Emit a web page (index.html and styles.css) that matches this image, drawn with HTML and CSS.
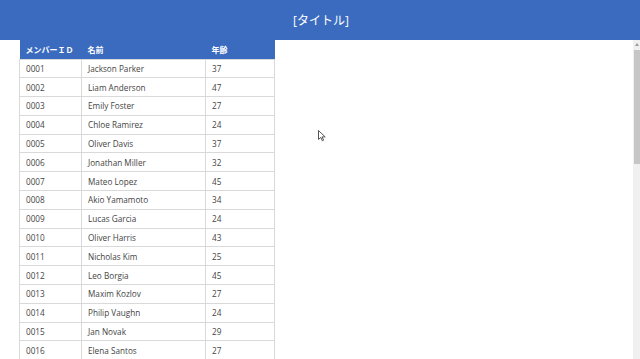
FILE: index.html
```html
<!DOCTYPE html>
<html lang="ja">
<head>
    <meta charset="UTF-8">
    <meta name="viewport" content="width=device-width, initial-scale=1.0">
    <title>メンバー一覧</title>
    <link rel="stylesheet" href="styles.css">
</head>
<body>
    <header class="title-bar">
        <h1>[タイトル]</h1>
    </header>

    <div class="screen">
        <div class="content">
            <table class="members">
                <thead>
                    <tr>
                        <th class="col-id">メンバーＩＤ</th>
                        <th class="col-name">名前</th>
                        <th class="col-age">年齢</th>
                    </tr>
                </thead>
                <tbody>
                    <tr><td>0001</td><td>Jackson Parker</td><td>37</td></tr>
                    <tr><td>0002</td><td>Liam Anderson</td><td>47</td></tr>
                    <tr><td>0003</td><td>Emily Foster</td><td>27</td></tr>
                    <tr><td>0004</td><td>Chloe Ramirez</td><td>24</td></tr>
                    <tr><td>0005</td><td>Oliver Davis</td><td>37</td></tr>
                    <tr><td>0006</td><td>Jonathan Miller</td><td>32</td></tr>
                    <tr><td>0007</td><td>Mateo Lopez</td><td>45</td></tr>
                    <tr><td>0008</td><td>Akio Yamamoto</td><td>34</td></tr>
                    <tr><td>0009</td><td>Lucas Garcia</td><td>24</td></tr>
                    <tr><td>0010</td><td>Oliver Harris</td><td>43</td></tr>
                    <tr><td>0011</td><td>Nicholas Kim</td><td>25</td></tr>
                    <tr><td>0012</td><td>Leo Borgia</td><td>45</td></tr>
                    <tr><td>0013</td><td>Maxim Kozlov</td><td>27</td></tr>
                    <tr><td>0014</td><td>Philip Vaughn</td><td>24</td></tr>
                    <tr><td>0015</td><td>Jan Novak</td><td>29</td></tr>
                    <tr><td>0016</td><td>Elena Santos</td><td>27</td></tr>
                </tbody>
            </table>

            <!-- mouse pointer captured in the screenshot -->
            <svg class="pointer" width="8" height="12" viewBox="0 0 8 12">
                <path d="M0.5 0.5 L0.5 9.5 L2.8 7.4 L4.3 10.8 L5.6 10.2 L4.1 6.9 L7.2 6.9 Z" fill="#fff" stroke="#555" stroke-width="1"/>
            </svg>
        </div>

        <div class="scrollbar">
            <div class="scroll-arrow"></div>
            <div class="scroll-thumb"></div>
        </div>
    </div>
</body>
</html>
```

FILE: styles.css
```css
* {
    margin: 0;
    padding: 0;
    box-sizing: border-box;
}

body {
    font-family: "Open Sans", "Noto Sans CJK JP", sans-serif;
    background-color: #fff;
    width: 640px;
    height: 359px;
    overflow: hidden;
}

.title-bar {
    height: 40px;
    background-color: #3b6bbf;
    display: flex;
    align-items: center;
    justify-content: center;
}

.title-bar h1 {
    font-size: 12px;
    font-weight: normal;
    color: #fff;
    padding-left: 2px;
    padding-bottom: 1px;
}

.screen {
    display: flex;
    height: 319px;
}

.content {
    flex: 1;
    position: relative;
    padding-left: 19px;
}

.members {
    border-collapse: collapse;
    font-size: 8.2px;
    color: #444;
    table-layout: fixed;
    width: 255px;
}

.members th {
    background-color: #3b6bbf;
    color: #fff;
    font-weight: bold;
    text-align: left;
    height: 19px;
    padding: 0 6px;
    font-size: 8px;
    white-space: nowrap;
}

.members .col-id {
    width: 62px;
}

.members .col-name {
    width: 124px;
}

.members .col-age {
    width: 69px;
}

.members td {
    height: 18.8px;
    padding: 0 6px;
    border: 1px solid #d9d9d9;
    white-space: nowrap;
}

.pointer {
    position: absolute;
    left: 318px;
    top: 90px;
}

.scrollbar {
    width: 7px;
    background-color: #f0f0f0;
    display: flex;
    flex-direction: column;
    align-items: center;
}

.scroll-arrow {
    margin-top: 3px;
    width: 0;
    height: 0;
    border-left: 2px solid transparent;
    border-right: 2px solid transparent;
    border-bottom: 3px solid #999;
}

.scroll-thumb {
    margin-top: 4px;
    width: 6px;
    height: 114px;
    background-color: #c6c6c6;
}
```
